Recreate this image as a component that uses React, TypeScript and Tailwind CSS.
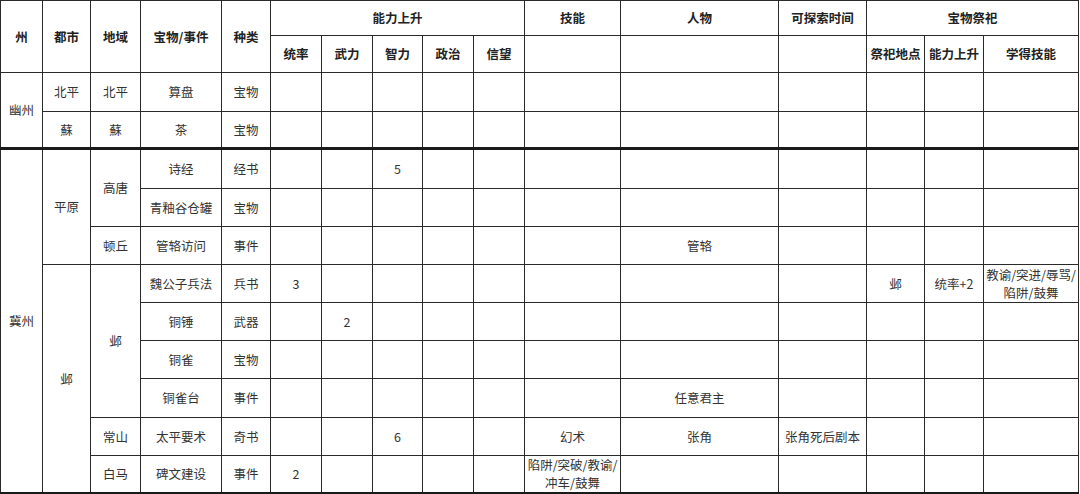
const cell = 'border border-[#2a2a2a] text-center align-middle px-[2px] py-0 leading-[18px]';
const head = cell + ' font-bold text-[#222]';

const widths = [42, 48, 50, 81, 49, 51, 51, 50, 51, 51, 96, 158, 88, 58, 59, 95];

// values for columns 5..15 (统率 ... 学得技能)
function Rest({ v = {} }: { v?: Record<number, string> }) {
  return (
    <>
      {Array.from({ length: 11 }, (_, i) => (
        <td key={i} className={cell}>
          {v[i + 5] ?? ''}
        </td>
      ))}
    </>
  );
}

export default function App() {
  return (
    <div className="w-[1080px] h-[494px] bg-white overflow-hidden">
      <table
        className="table-fixed border-collapse w-[1079px] text-[12.5px] text-[#333]"
        style={{ fontFamily: '"Noto Sans CJK SC", "Noto Sans", sans-serif' }}
      >
        <colgroup>
          {widths.map((w, i) => (
            <col key={i} style={{ width: w }} />
          ))}
        </colgroup>
        <thead>
          <tr className="h-[35px]">
            <th rowSpan={2} className={head}>州</th>
            <th rowSpan={2} className={head}>都市</th>
            <th rowSpan={2} className={head}>地域</th>
            <th rowSpan={2} className={head}>宝物/事件</th>
            <th rowSpan={2} className={head}>种类</th>
            <th colSpan={5} className={head}>能力上升</th>
            <th className={head}>技能</th>
            <th className={head}>人物</th>
            <th className={head}>可探索时间</th>
            <th colSpan={3} className={head}>宝物祭祀</th>
          </tr>
          <tr className="h-[37px]">
            <th className={head}>统率</th>
            <th className={head}>武力</th>
            <th className={head}>智力</th>
            <th className={head}>政治</th>
            <th className={head}>信望</th>
            <th className={head}></th>
            <th className={head}></th>
            <th className={head}></th>
            <th className={head}>祭祀地点</th>
            <th className={head}>能力上升</th>
            <th className={head}>学得技能</th>
          </tr>
        </thead>
        <tbody>
          <tr className="h-[39px]">
            <td rowSpan={2} className={cell}>幽州</td>
            <td className={cell}>北平</td>
            <td className={cell}>北平</td>
            <td className={cell}>算盘</td>
            <td className={cell}>宝物</td>
            <Rest />
          </tr>
          <tr className="h-[37px]">
            <td className={cell}>蘇</td>
            <td className={cell}>蘇</td>
            <td className={cell}>茶</td>
            <td className={cell}>宝物</td>
            <Rest />
          </tr>
          <tr className="h-[40px] border-t-[3px] border-[#1a1a1a]">
            <td rowSpan={9} className={cell}>冀州</td>
            <td rowSpan={3} className={cell}>平原</td>
            <td rowSpan={2} className={cell}>高唐</td>
            <td className={cell}>诗经</td>
            <td className={cell}>经书</td>
            <Rest v={{ 7: '5' }} />
          </tr>
          <tr className="h-[38px]">
            <td className={cell}>青釉谷仓罐</td>
            <td className={cell}>宝物</td>
            <Rest />
          </tr>
          <tr className="h-[38px]">
            <td className={cell}>顿丘</td>
            <td className={cell}>管辂访问</td>
            <td className={cell}>事件</td>
            <Rest v={{ 11: '管辂' }} />
          </tr>
          <tr className="h-[38px]">
            <td rowSpan={6} className={cell}>邺</td>
            <td rowSpan={4} className={cell}>邺</td>
            <td className={cell}>魏公子兵法</td>
            <td className={cell}>兵书</td>
            <Rest v={{ 5: '3', 13: '邺', 14: '统率+2', 15: '教谕/突进/辱骂/陷阱/鼓舞' }} />
          </tr>
          <tr className="h-[38px]">
            <td className={cell}>铜锤</td>
            <td className={cell}>武器</td>
            <Rest v={{ 6: '2' }} />
          </tr>
          <tr className="h-[38px]">
            <td className={cell}>铜雀</td>
            <td className={cell}>宝物</td>
            <Rest />
          </tr>
          <tr className="h-[39px]">
            <td className={cell}>铜雀台</td>
            <td className={cell}>事件</td>
            <Rest v={{ 11: '任意君主' }} />
          </tr>
          <tr className="h-[38px]">
            <td className={cell}>常山</td>
            <td className={cell}>太平要术</td>
            <td className={cell}>奇书</td>
            <Rest v={{ 7: '6', 10: '幻术', 11: '张角', 12: '张角死后剧本' }} />
          </tr>
          <tr className="h-[38px] border-b-[3px] border-[#1a1a1a]">
            <td className={cell}>白马</td>
            <td className={cell}>碑文建设</td>
            <td className={cell}>事件</td>
            <Rest v={{ 5: '2', 10: '陷阱/突破/教谕/冲车/鼓舞' }} />
          </tr>
        </tbody>
      </table>
    </div>
  );
}
